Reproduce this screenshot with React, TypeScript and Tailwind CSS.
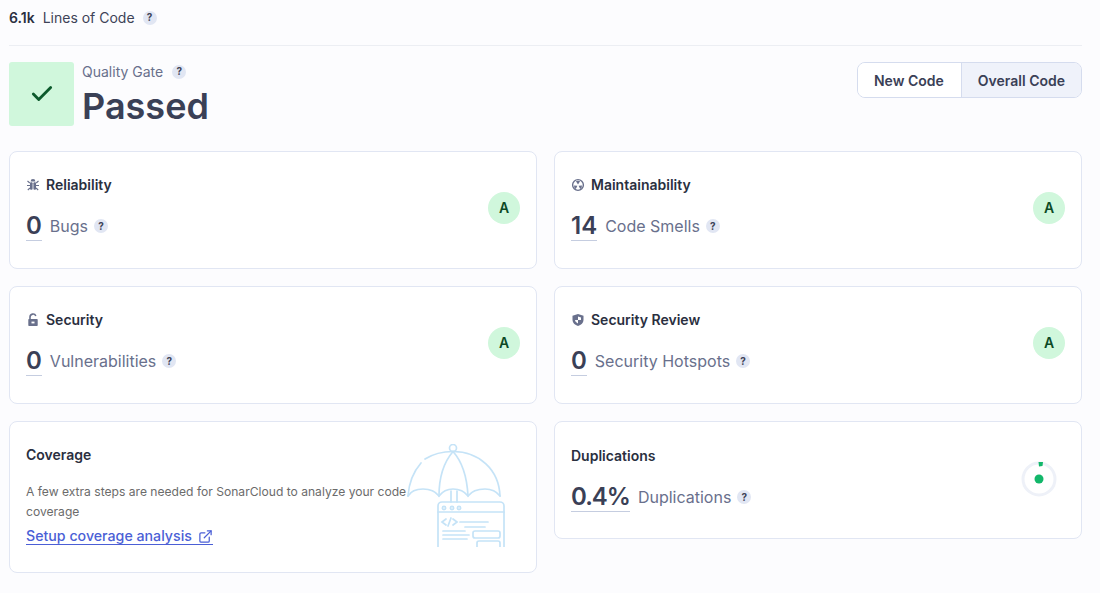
import { ReactNode } from "react";
import { Check, ExternalLink } from "lucide-react";

function Help() {
  return (
    <span className="inline-flex items-center justify-center w-[14px] h-[14px] rounded-full bg-[#e1e6f3] text-[10px] font-bold text-[#3e4357]">
      ?
    </span>
  );
}

function Grade() {
  return (
    <div className="flex items-center justify-center w-8 h-8 rounded-full bg-[#d0f7dc] text-[14px] font-semibold text-[#0c4a25]">
      A
    </div>
  );
}

function BugIcon() {
  return (
    <svg width="14" height="14" viewBox="0 0 14 14" fill="#69708c">
      <path d="M4.600 3.400a2.400 2.400 0 0 1 4.800 0z" />
      <rect x="4" y="4.200" width="2.600" height="7.600" rx="1" />
      <rect x="7.400" y="4.200" width="2.600" height="7.600" rx="1" />
      <path d="M1.500 3l2.300 2M12.500 3l-2.300 2M1 7.500h3M13 7.500h-3M1.800 12l2.200-2M12.200 12L10 10" stroke="#69708c" strokeWidth="1.100" fill="none" />
    </svg>
  );
}

function SmellIcon() {
  return (
    <svg width="14" height="14" viewBox="0 0 14 14" fill="none">
      <circle cx="7" cy="7" r="5.400" stroke="#69708c" strokeWidth="1.400" />
      <path d="M7 6.400 4.900 3.300a4 4 0 0 1 4.200 0zM6.400 7.800 4.800 11.100A4 4 0 0 1 3 7.500zM7.600 7.800 9.200 11.100A4 4 0 0 0 11 7.500z" fill="#69708c" />
    </svg>
  );
}

function LockIcon() {
  return (
    <svg width="14" height="14" viewBox="0 0 14 14" fill="none">
      <path d="M4 6.500V4a3 3 0 0 1 5.800-1" stroke="#69708c" strokeWidth="1.600" />
      <path d="M3 6h8a.7.7 0 0 1 .7.7v5.600a.7.7 0 0 1-.7.7H3a.7.7 0 0 1-.7-.7V6.700A.7.7 0 0 1 3 6z" fill="#69708c" />
      <rect x="5.500" y="8.600" width="3" height="1.800" fill="#fff" />
    </svg>
  );
}

function ShieldIcon() {
  return (
    <svg width="14" height="14" viewBox="0 0 14 14">
      <path d="M7 1 12.500 2.800V7c0 3-2.300 5-5.500 6C3.800 12 1.500 10 1.500 7V2.800z" fill="#69708c" />
      <path d="M7 3.400 10 4.400V7H7zM7 7v3.400C5.500 9.800 4.200 8.700 4 7z" fill="#fff" />
    </svg>
  );
}

function Umbrella() {
  return (
    <svg width="100" height="103" viewBox="0 0 100 103" fill="none" stroke="#c5e3f7" strokeWidth="1.700" strokeLinecap="round" className="shrink-0">
      <circle cx="47" cy="4" r="3.500" />
      <path d="M2 52C3 38 8 27 15 19M19 15C27 10 36 7.500 47 7.500c26 0 46 18 47 44.500" />
      <path d="M2 52c3-5 9-7 15-7 7 0 13 3 16 7 3-4 8-7 14-7 7 0 12 3 15 7 3-4 9-7 17-7 6 0 12 3 15 7" />
      <path d="M33 52C33 33 38 18 47 7.500c9 10 14 25 15 44.500" />
      <path d="M45 47v11M51 47v11" />
      <path d="M32 103V62a4 4 0 0 1 4-4h58a4 4 0 0 1 4 4v41" />
      <path d="M32 68h66" />
      <circle cx="38" cy="64" r="1.600" />
      <circle cx="46" cy="64" r="1.600" />
      <circle cx="53" cy="64" r="1.600" />
      <path d="M40 75l-4 3 4 3M42 82l3-8M47 75l4 3-4 3" />
      <path d="M54 78h28M59 83h20M37 87h22M37 91h26M37 95h24" />
      <rect x="67" y="87" width="27" height="7" rx="2" />
      <path d="M71 103v-4a2 2 0 0 1 2-2h19a2 2 0 0 1 2 2v4" />
    </svg>
  );
}

function Card({ children, className = "" }: { children: ReactNode; className?: string }) {
  return (
    <div className={`rounded-lg border border-[#e1e6f3] bg-white ${className}`}>{children}</div>
  );
}

function Title({ icon, label }: { icon?: ReactNode; label: string }) {
  return (
    <div className="flex items-center gap-[6px] h-[20px] text-[14px] font-semibold text-[#2a2f40]">
      {icon}
      {label}
    </div>
  );
}

function Metric({ icon, title, value, label }: { icon: ReactNode; title: string; value: string; label: string }) {
  return (
    <Card className="flex items-center justify-between h-[118px] pl-[16px] pr-[16px] pb-[5px]">
      <div>
        <Title icon={icon} label={title} />
        <div className="flex items-center gap-[8px] mt-[17px]">
          <span className="border-b border-[#c5cde0] text-[24px] leading-[28px] font-semibold text-[#3a4056]">
            {value}
          </span>
          <span className="text-[16px] text-[#69708c] mr-[-2px]">{label}</span>
          <Help />
        </div>
      </div>
      <Grade />
    </Card>
  );
}

export default function App() {
  return (
    <div className="w-[1100px] h-[593px] overflow-hidden bg-[#fcfcfe] pl-[9px] pr-[18px] font-['Inter',sans-serif]">
      <div className="flex items-center gap-[8px] h-[46px] pb-[10px] border-b border-[#eceef3]">
        <span className="text-[14px] font-semibold text-[#2a2f40]">6.1k</span>
        <span className="text-[14px] text-[#3e4357]">Lines of Code</span>
        <Help />
      </div>

      <div className="flex justify-between mt-[16px]">
        <div className="flex gap-[8px]">
          <div className="flex items-center justify-center w-[65px] h-[64px] rounded-[3px] bg-[#d0f7dc]">
            <Check size={26} strokeWidth={2.600} className="text-[#0c5a2c]" />
          </div>
          <div>
            <div className="flex items-center gap-[9px] h-[19px] text-[14px] text-[#69708c]">
              Quality Gate
              <Help />
            </div>
            <div className="mt-[3px] text-[36px] leading-[44px] font-semibold text-[#3a4056]">Passed</div>
          </div>
        </div>
        <div className="flex h-[36px] rounded-lg border border-[#d5dcee] overflow-hidden text-[14px] font-semibold text-[#3a4056]">
          <div className="flex items-center pl-[16px] pr-[17px] bg-white border-r border-[#d5dcee]">New Code</div>
          <div className="flex items-center px-[16px] bg-[#eff2fa]">Overall Code</div>
        </div>
      </div>

      <div className="grid grid-cols-2 gap-[17px] mt-[23px] items-start">
        <Metric icon={<BugIcon />} title="Reliability" value="0" label="Bugs" />
        <Metric icon={<SmellIcon />} title="Maintainability" value="14" label="Code Smells" />
        <Metric icon={<LockIcon />} title="Security" value="0" label="Vulnerabilities" />
        <Metric icon={<ShieldIcon />} title="Security Review" value="0" label="Security Hotspots" />

        <Card className="flex justify-between h-[152px] pl-[16px] pr-[30px] pt-[22px]">
          <div>
            <Title label="Coverage" />
            <p className="mt-[18px] w-[385px] text-[12.100px] leading-[20px] text-[#6b6b6b]">
              A few extra steps are needed for SonarCloud to analyze your code coverage
            </p>
            <a className="flex items-center gap-[6px] mt-[6px] w-fit border-b border-[#4b5fd6] text-[14.200px] leading-[16px] font-medium text-[#4b5fd6]">
              Setup coverage analysis
              <ExternalLink size={15} />
            </a>
          </div>
          <div className="-ml-[33px]">
            <Umbrella />
          </div>
        </Card>

        <Card className="flex items-center justify-between h-[118px] pl-[16px] pr-[24px] pb-[3px]">
          <div>
            <Title label="Duplications" />
            <div className="flex items-center gap-[8px] mt-[17px]">
              <span className="border-b border-[#c5cde0] text-[24px] leading-[28px] font-semibold tracking-[-1px] text-[#3a4056]">
                0.4%
              </span>
              <span className="text-[16px] text-[#69708c] mr-[-2px]">Duplications</span>
              <Help />
            </div>
          </div>
          <svg width="36" height="36" viewBox="0 0 36 36" fill="none">
            <circle cx="18" cy="18" r="16" stroke="#eef1f8" strokeWidth="3" />
            <path d="M17.500 1h4.500l-.5 4-3.500.500z" fill="#12b76a" />
            <circle cx="18" cy="18" r="4.500" fill="#12b76a" />
          </svg>
        </Card>
      </div>
    </div>
  );
}
